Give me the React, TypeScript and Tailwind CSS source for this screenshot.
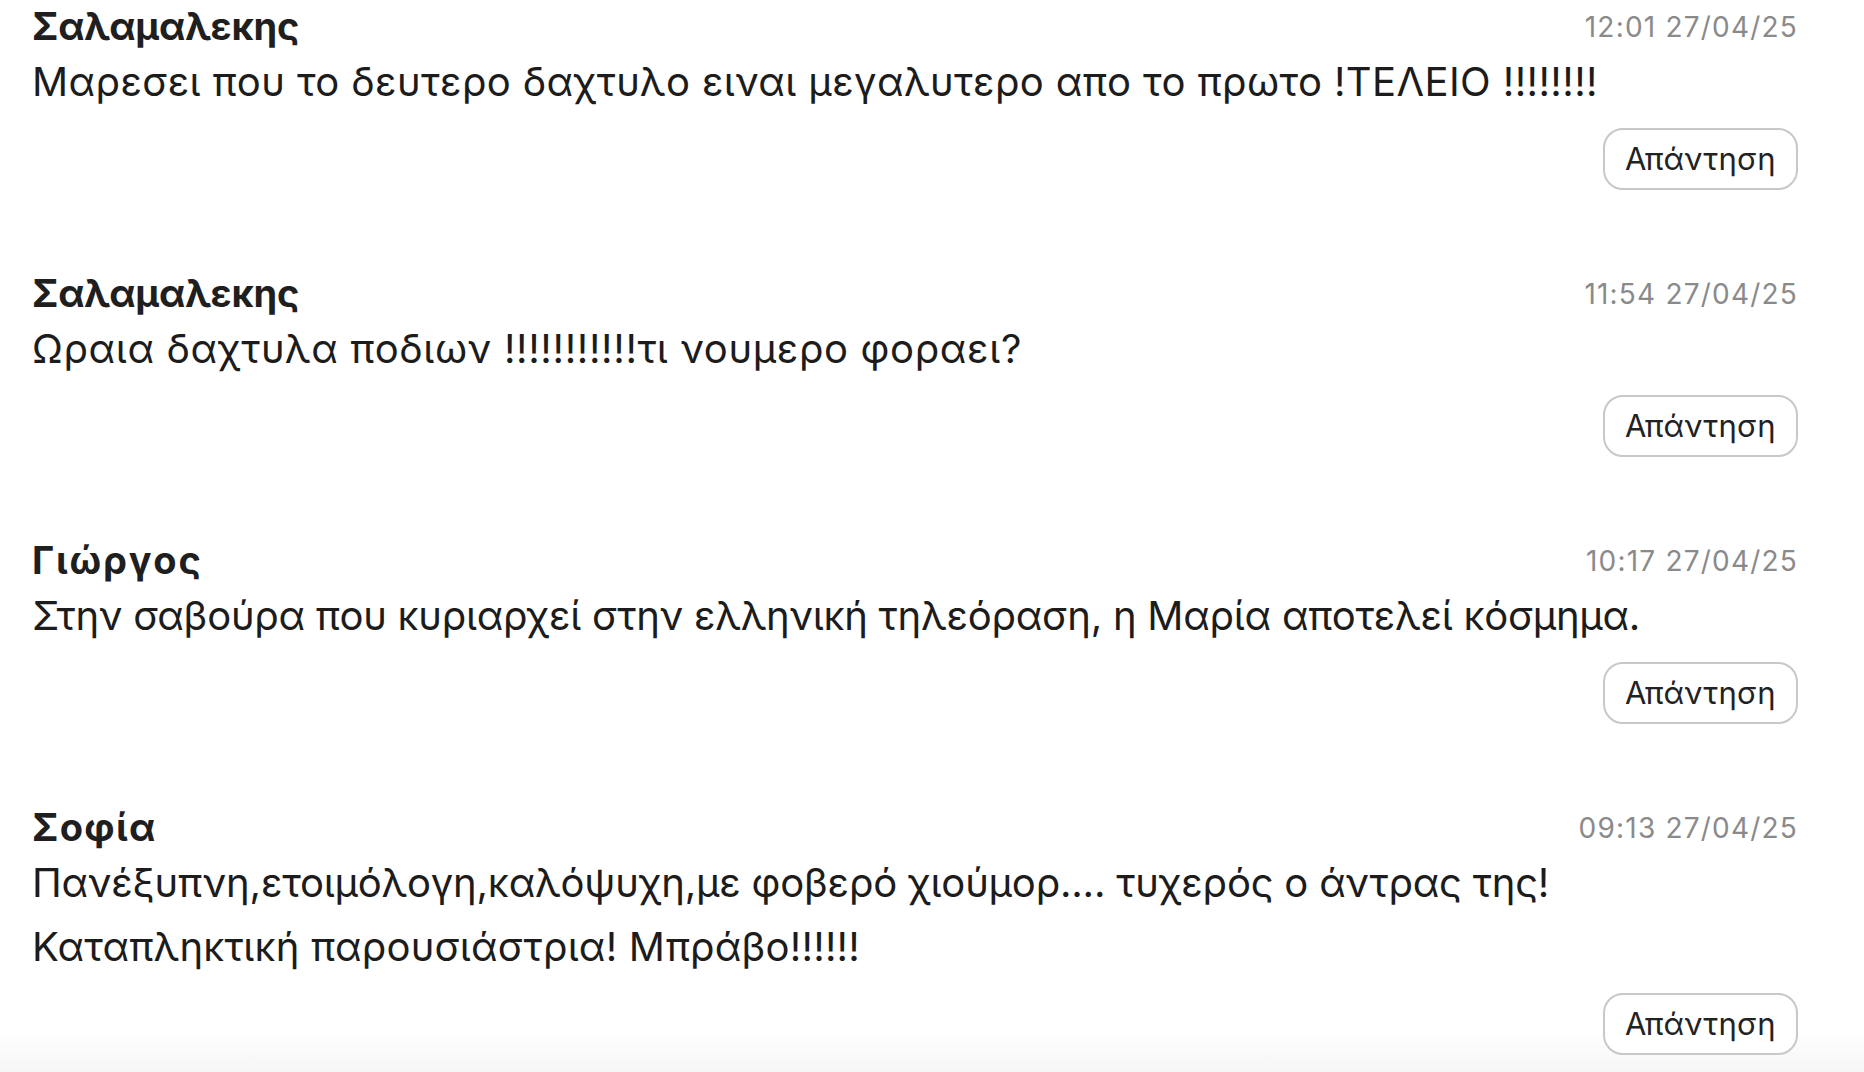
import React from "react";

type Line = { text: string; cls: string };
type C = { name: string; nameCls: string; time: string; body: Line[] };

const comments: C[] = [
  {
    name: "Σαλαμαλεκης",
    nameCls: "tracking-[-0.2px]",
    time: "12:01 27/04/25",
    body: [
      {
        text: "Μαρεσει που το δευτερο δαχτυλο ειναι μεγαλυτερο απο το πρωτο !ΤΕΛΕΙΟ !!!!!!!!",
        cls: "tracking-[0.4px]",
      },
    ],
  },
  {
    name: "Σαλαμαλεκης",
    nameCls: "tracking-[-0.2px]",
    time: "11:54 27/04/25",
    body: [{ text: "Ωραια δαχτυλα ποδιων !!!!!!!!!!!τι νουμερο φοραει?", cls: "tracking-[0.65px]" }],
  },
  {
    name: "Γιώργος",
    nameCls: "tracking-[1.8px]",
    time: "10:17 27/04/25",
    body: [
      {
        text: "Στην σαβούρα που κυριαρχεί στην ελληνική τηλεόραση, η Μαρία αποτελεί κόσμημα.",
        cls: "tracking-[-0.25px]",
      },
    ],
  },
  {
    name: "Σοφία",
    nameCls: "tracking-[1.3px]",
    time: "09:13 27/04/25",
    body: [
      {
        text: "Πανέξυπνη,ετοιμόλογη,καλόψυχη,με φοβερό χιούμορ.... τυχερός ο άντρας της!",
        cls: "tracking-[-0.2px]",
      },
      { text: "Καταπληκτική παρουσιάστρια! Μπράβο!!!!!!", cls: "tracking-[0.2px]" },
    ],
  },
];

function Comment({ c }: { c: C }) {
  return (
    <article className="flex flex-col">
      <header className="flex h-[50px] items-start justify-between">
        <h3 className={`pt-[4px] text-[38px] font-bold leading-[44px] text-[#1f1f1f] ${c.nameCls}`}>
          {c.name}
        </h3>
        <time className="pt-[7px] text-[28px] leading-[40px] tracking-[1.2px] text-[#8a8a8a]">
          {c.time}
        </time>
      </header>
      <div className="flex flex-col">
        {c.body.map((l, j) => (
          <p key={j} className={`whitespace-nowrap text-[40px] leading-[64px] text-[#1c1c1c] ${l.cls}`}>
            {l.text}
          </p>
        ))}
      </div>
      <div className="mt-[14px] flex justify-end">
        <button className="flex h-[62px] w-[195px] items-center justify-center rounded-[20px] border-2 border-[#c8c8c8] bg-white text-[31px] tracking-[0.3px] text-[#222]">
          Απάντηση
        </button>
      </div>
    </article>
  );
}

export default function App() {
  return (
    <div className="min-h-[1072px] w-full bg-gradient-to-b from-white from-[96%] to-[#f6f6f6] pl-[32px] pr-[66px] font-[Inter,'Noto_Sans',sans-serif] text-[#1c1c1c]">
      <div className="flex flex-col gap-[77px]">
        {comments.map((c, i) => (
          <Comment key={i} c={c} />
        ))}
      </div>
    </div>
  );
}
